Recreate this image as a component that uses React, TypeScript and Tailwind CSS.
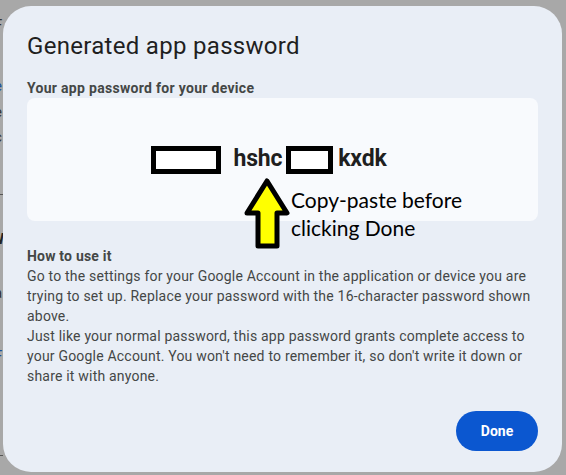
import React from "react";

export default function App() {
  return (
    <div className="relative h-[475px] w-[566px] overflow-hidden bg-[#a8a8a8] pl-[3px] pt-[6px]" style={{ fontFamily: "Roboto, 'Liberation Sans', sans-serif" }}>
      {/* page fragments behind the overlay */}
      <div className="absolute left-0 top-0 h-full w-[3px] overflow-hidden text-[15px] text-[#1a4f9a]">
        <span className="absolute left-[-6px] top-[14px] text-[#333]">F</span>
        <span className="absolute left-[-6px] top-[75px]">e</span>
        <span className="absolute left-[-6px] top-[101px] text-[#333]">e</span>
        <span className="absolute left-[-6px] top-[126px] text-[#333]">c</span>
        <div className="absolute left-0 top-[194px] h-px w-full bg-[#555]" />
        <span className="absolute left-[-9px] top-[228px] font-bold text-[#222]">W</span>
        <span className="absolute left-[-6px] top-[282px] text-[#333]">a</span>
        <span className="absolute left-[-6px] top-[345px]">F</span>
        <div className="absolute left-0 top-[455px] h-px w-full bg-[#555]" />
      </div>

      <div className="relative flex h-[466px] w-[559px] flex-col rounded-[28px] bg-[#e9eef6] px-[24px] pb-[21px] pt-[24px]">
        <h1 className="text-[24px] leading-[32px] tracking-[0.3px] text-[#1f1f1f]">Generated app password</h1>
        <div className="mt-[16px] text-[14px] font-bold leading-[20px] tracking-[0.3px] text-[#444746]">Your app password for your device</div>

        <div className="relative flex h-[123px] items-center justify-center rounded-[8px] bg-[#f8fafd] pr-[28px]">
          <div className="flex items-center text-[23px] font-bold tracking-[-0.2px] text-[#1f1f1f]">
            <span className="mr-[13px] box-border h-[28px] w-[70px] border-[5px] border-black bg-white" />
            <span>hshc</span>
            <span className="ml-[4px] mr-[5px] box-border h-[28px] w-[47px] border-[5px] border-black bg-white" />
            <span>kxdk</span>
          </div>
        </div>

        {/* annotation overlay */}
        <div className="pointer-events-none absolute left-[238px] top-[171px] flex items-start">
          <svg width="52" height="76" viewBox="0 0 52 76">
            <polygon
              points="26,4 46,36 36,36 36,69 17,69 17,36 6,36"
              fill="#ffff00"
              stroke="#000"
              strokeWidth="5"
              strokeLinejoin="round"
            />
          </svg>
          <div className="-ml-[2px] mt-[9px] text-[21px] leading-[28px] text-black" style={{ fontFamily: "Lato, 'Open Sans', sans-serif" }}>
            <div>Copy-paste before</div>
            <div>clicking Done</div>
          </div>
        </div>

        <div className="mt-[25px] text-[14px] font-bold leading-[20px] tracking-[0.2px] text-[#444746]">How to use it</div>
        <p className="text-[14px] leading-[20px] tracking-[0.2px] text-[#444746]">
          Go to the settings for your Google Account in the application or device you are trying to set up. Replace your password with the 16-character password shown above.
          <br />
          Just like your normal password, this app password grants complete access to your Google Account. You won't need to remember it, so don't write it down or share it with anyone.
        </p>

        <div className="mt-auto flex justify-end">
          <button className="h-[40px] w-[82px] rounded-full bg-[#0b57d0] text-[14px] font-bold text-white">Done</button>
        </div>
      </div>
    </div>
  );
}
